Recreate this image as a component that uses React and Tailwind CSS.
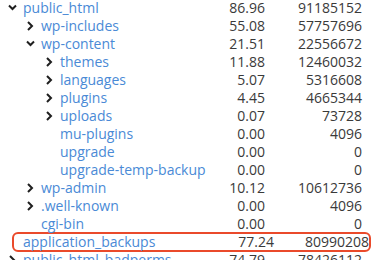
const ROWS = [
  { name: "public_html", level: 0, toggle: "open", mb: "86.96", bytes: "91185152" },
  { name: "wp-includes", level: 1, toggle: "closed", mb: "55.08", bytes: "57757696" },
  { name: "wp-content", level: 1, toggle: "open", mb: "21.51", bytes: "22556672" },
  { name: "themes", level: 2, toggle: "closed", mb: "11.88", bytes: "12460032" },
  { name: "languages", level: 2, toggle: "closed", mb: "5.07", bytes: "5316608" },
  { name: "plugins", level: 2, toggle: "closed", mb: "4.45", bytes: "4665344" },
  { name: "uploads", level: 2, toggle: "closed", mb: "0.07", bytes: "73728" },
  { name: "mu-plugins", level: 2, mb: "0.00", bytes: "4096" },
  { name: "upgrade", level: 2, mb: "0.00", bytes: "0" },
  { name: "upgrade-temp-backup", level: 2, mb: "0.00", bytes: "0" },
  { name: "wp-admin", level: 1, toggle: "closed", mb: "10.12", bytes: "10612736" },
  { name: ".well-known", level: 1, toggle: "closed", mb: "0.00", bytes: "4096" },
  { name: "cgi-bin", level: 1, mb: "0.00", bytes: "0" },
  { name: "application_backups", level: 0, mb: "77.24", bytes: "80990208", highlight: true },
  { name: "public_html_badperms", level: 0, toggle: "closed", mb: "74.79", bytes: "78426112" },
];

const INDENT = ["pl-[5px]", "pl-[23px]", "pl-[42px]"];

function Chevron({ open }) {
  return (
    <svg width="18" height="18" viewBox="0 0 18 18" className="shrink-0">
      {open ? (
        <polyline points="4,6.5 7.5,10 11,6.5" fill="none" stroke="#1f1f1f" strokeWidth="2" />
      ) : (
        <polyline points="5,5 9,9 5,13" fill="none" stroke="#1f1f1f" strokeWidth="2" />
      )}
    </svg>
  );
}

function Row({ row }) {
  return (
    <div
      className={`flex items-center ${
        row.highlight ? "border-2 border-[#ea4a2b] rounded-md h-[20px] -my-px ml-[12px] mr-[9px]" : "h-[18px]"
      }`}
    >
      <div className={`flex items-center flex-1 min-w-0 whitespace-nowrap ${row.highlight ? "pl-[9px]" : INDENT[row.level]}`}>
        {row.toggle ? <Chevron open={row.toggle === "open"} /> : !row.highlight && <span className="w-[18px] shrink-0" />}
        <span className="text-[#4a8ad6]">{row.name}</span>
      </div>
      <span className="w-[50px] text-right shrink-0">{row.mb}</span>
      <span className={`text-right shrink-0 ${row.highlight ? "w-[95px]" : "w-[97px] mr-[18px]"}`}>{row.bytes}</span>
    </div>
  );
}

export default function App() {
  return (
    <div
      className="w-[380px] h-[260px] overflow-hidden bg-white text-[14px] leading-[18px] text-[#3a3a3a]"
      style={{ fontFamily: '"Open Sans", sans-serif' }}
    >
      <div className="-mt-px">
        {ROWS.map((row) => (
          <Row key={row.name} row={row} />
        ))}
      </div>
    </div>
  );
}
